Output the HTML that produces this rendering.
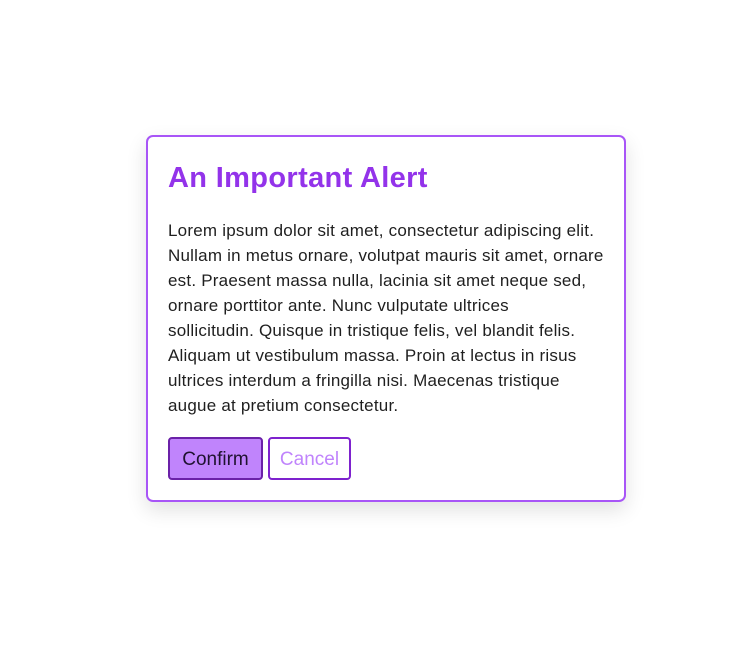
<!DOCTYPE html>
<html><head><meta charset="utf-8"><style>
html,body{margin:0;padding:0;background:#fff;width:747px;height:662px;overflow:hidden;font-family:"Liberation Sans",sans-serif;}
.card{position:absolute;left:146px;top:135px;width:476px;height:363px;border:2px solid #a855f7;border-radius:7px;box-shadow:0 8px 20px rgba(0,0,0,0.12);background:#fff;}
h1{position:absolute;left:20px;top:25px;margin:0;font-size:29px;font-weight:bold;color:#9333ea;white-space:nowrap;letter-spacing:0.35px;}
p{position:absolute;left:20px;top:81px;margin:0;font-size:17px;line-height:25px;color:#1f1f1f;white-space:nowrap;letter-spacing:0.22px;}
.b{position:absolute;top:300px;height:43px;border-radius:4px;box-sizing:border-box;font-size:19px;text-align:center;padding-top:3px;}
.c{left:20px;width:95px;background:#c084fc;border:2px solid #6b21a8;color:#1f1230;line-height:36px;}
.x{left:120px;width:83px;background:#fff;border:2px solid #7e22ce;color:#c084fc;line-height:36px;}
</style></head><body>
<div class="card">
<h1>An Important Alert</h1>
<p>Lorem ipsum dolor sit amet, consectetur adipiscing elit.<br>Nullam in metus ornare, volutpat mauris sit amet, ornare<br>est. Praesent massa nulla, lacinia sit amet neque sed,<br>ornare porttitor ante. Nunc vulputate ultrices<br>sollicitudin. Quisque in tristique felis, vel blandit felis.<br>Aliquam ut vestibulum massa. Proin at lectus in risus<br>ultrices interdum a fringilla nisi. Maecenas tristique<br>augue at pretium consectetur.</p>
<div class="b c">Confirm</div>
<div class="b x">Cancel</div>
</div>
</body></html>
